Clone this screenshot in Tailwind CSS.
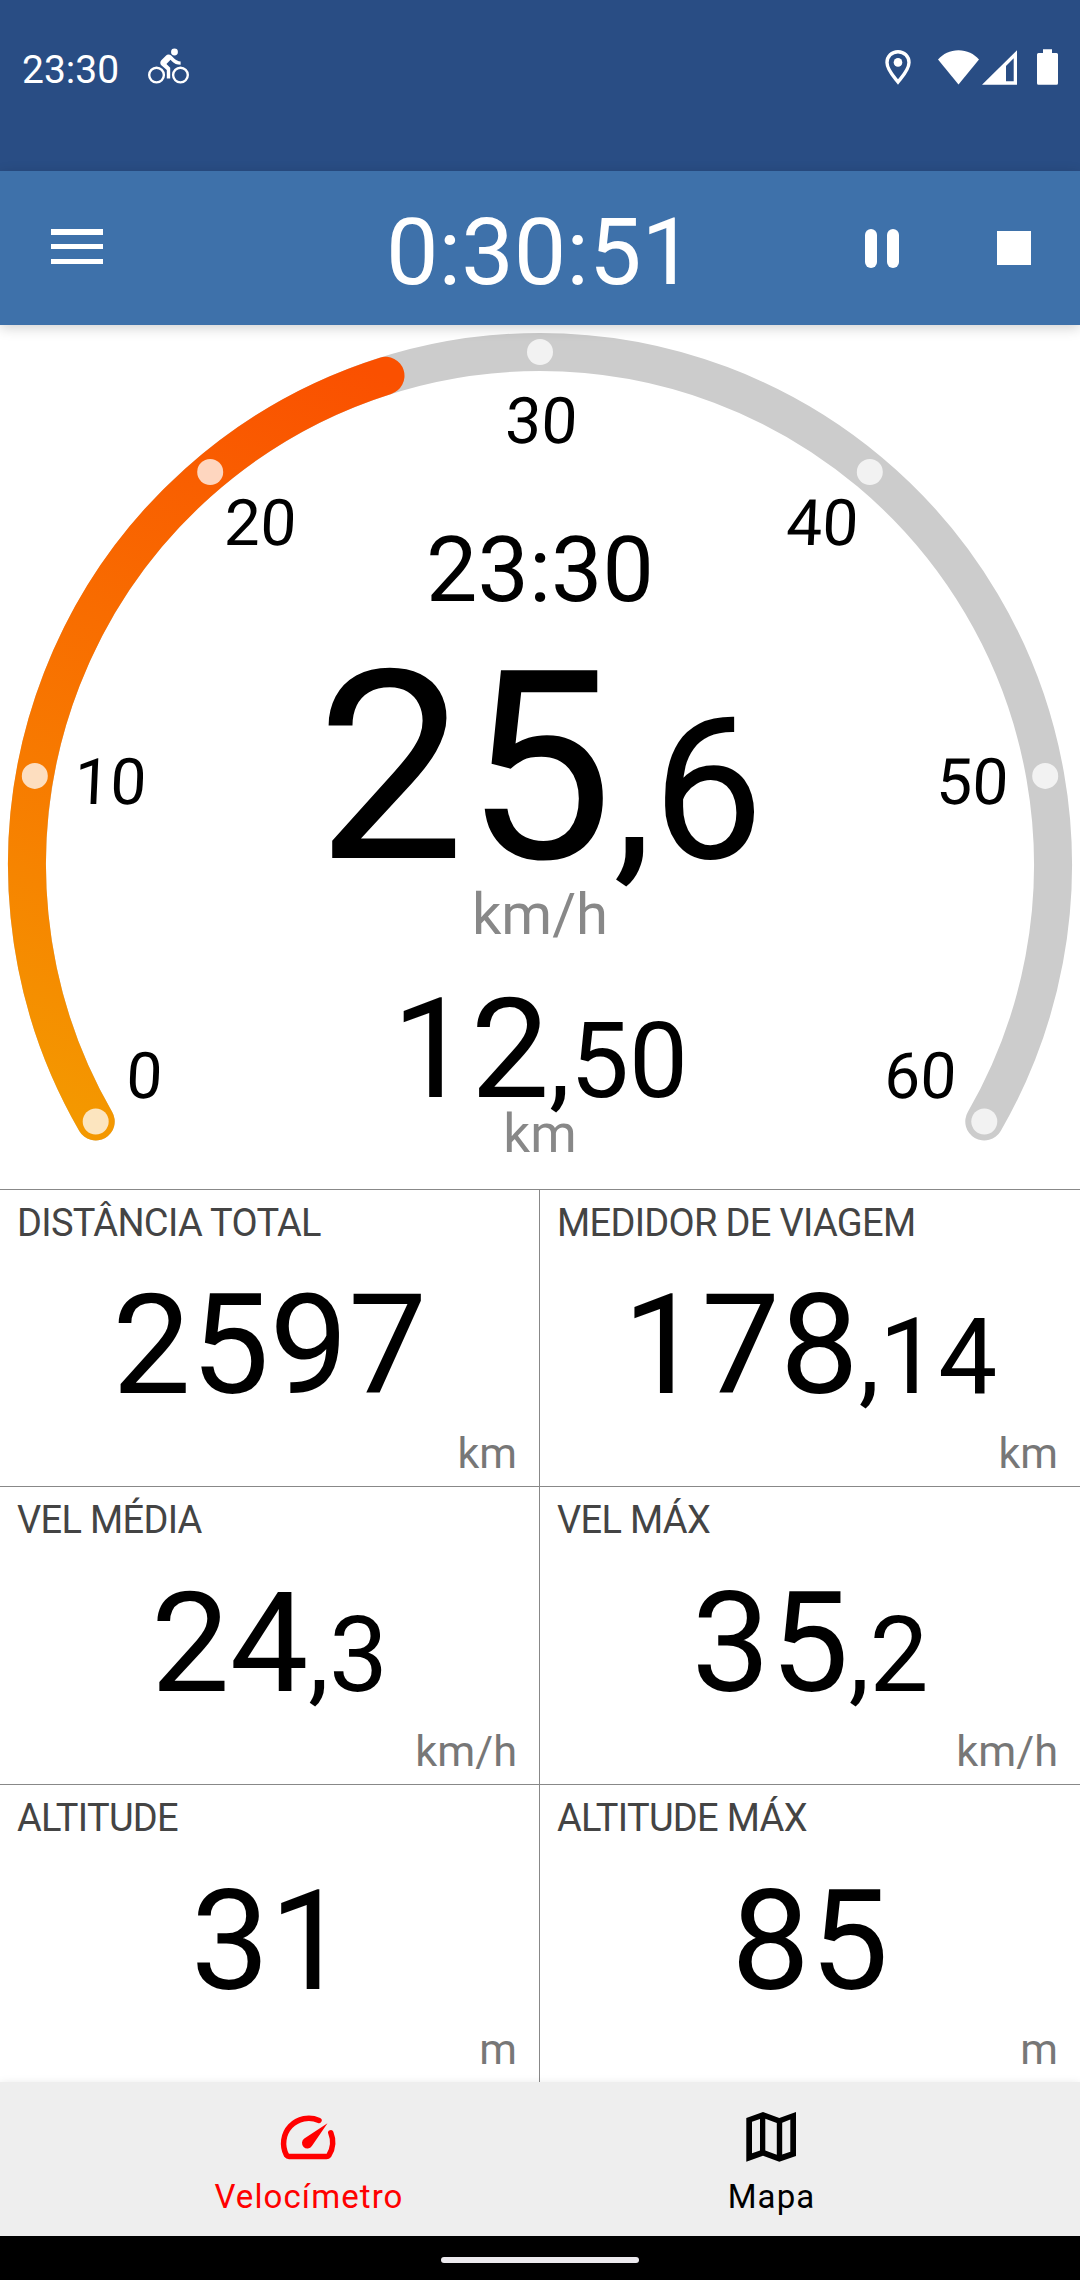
<!DOCTYPE html>
<html lang="pt">
  <head>
    <meta charset="UTF-8" />
    <title>Velocímetro</title>
    <meta name="viewport" content="width=device-width, initial-scale=1.0" />
    <script src="https://cdn.jsdelivr.net/npm/@tailwindcss/browser@4"></script>
  </head>
  <body class="w-[1080px] h-[2280px] flex flex-col overflow-hidden bg-white text-black font-[Roboto,sans-serif]">
    <!-- Status bar -->
    <div class="h-[171px] shrink-0 bg-[#294d84] text-white px-[22px] flex items-start">
      <span class="mt-[48px] text-[39px] leading-[44px] w-[126px]">23:30</span>
      <svg class="mt-[46px] w-[41px] h-[41px]" viewBox="0 0 24 24" fill="currentColor">
        <circle cx="15.5" cy="3.5" r="2" />
        <path d="M10.8 10.5l2.4-2.4.8.8c1.3 1.3 3 2.1 5.1 2.1V9c-1.5 0-2.7-.6-3.6-1.5l-1.9-1.9c-.5-.4-1-.6-1.6-.6s-1.1.2-1.4.6L7.8 8.4c-.4.4-.6.9-.6 1.4 0 .6.2 1.1.6 1.4L11 14v5h2v-6.2z" />
        <g fill="none" stroke="currentColor" stroke-width="1.400">
          <circle cx="5" cy="17" r="4.300" />
          <circle cx="19" cy="17" r="4.300" />
        </g>
      </svg>
      <svg class="ml-auto mt-[47px] w-[178px] h-[40px]" viewBox="880 47 178 40" fill="currentColor">
        <path d="M898 51.700c-6.200 0-11 4.700-11 10.900 0 7.600 7.500 14.900 11 19.400 3.500-4.500 11-11.800 11-19.400 0-6.200-4.800-10.900-11-10.900z" fill="none" stroke="currentColor" stroke-width="3.400" />
        <circle cx="898" cy="62.400" r="4.300" />
        <path d="M938 59.500C943 54 950 50.300 958.500 50.300S974 54 979 59.500L958.500 84.500z" />
        <path fill-rule="evenodd" d="M982 84.800L1017 50.300V84.800zM1006 66V81.200H1013.700V58.300z" />
        <path d="M1043 49.200h9v3.800h4.500q1.500 0 1.500 1.500v28.700q0 1.500-1.500 1.500h-18q-1.500 0-1.500-1.500V54.500q0-1.500 1.500-1.500h4.500z" />
      </svg>
    </div>

    <!-- Toolbar -->
    <header class="relative z-10 h-[154px] shrink-0 bg-[#3e71aa] text-white flex items-center justify-between pl-[51px] pr-[49px] shadow-[0_3px_12px_rgba(0,0,0,0.18)]">
      <div class="w-[52px] h-[35px] -mt-[3px] flex flex-col justify-between">
        <div class="h-[5.5px] bg-white"></div>
        <div class="h-[5.5px] bg-white"></div>
        <div class="h-[5.5px] bg-white"></div>
      </div>
      <h1 class="absolute inset-x-0 top-[35px] text-center text-[93.5px] leading-none">0:30:51</h1>
      <div class="flex items-center">
        <div class="flex gap-[10px] mr-[98px]">
          <div class="w-[12px] h-[39px] rounded-full bg-white"></div>
          <div class="w-[12px] h-[39px] rounded-full bg-white"></div>
        </div>
        <div class="size-[34px] bg-white"></div>
      </div>
    </header>

    <!-- Dial -->
    <main class="relative h-[864px] shrink-0">
      <svg class="absolute inset-0 w-full h-full" viewBox="0 325 1080 864">
        <defs>
          <linearGradient id="speed" gradientUnits="userSpaceOnUse" x1="95.7" y1="1121.5" x2="385" y2="376">
            <stop offset="0" stop-color="#f49800" />
            <stop offset="0.38" stop-color="#f77b00" />
            <stop offset="1" stop-color="#fa5000" />
          </linearGradient>
        </defs>
        <g fill="none" stroke-width="38" stroke-linecap="round">
          <path stroke="#ccc" d="M95.73 1121.5A513 513 0 1 1 984.27 1121.5" />
          <path stroke="url(#speed)" d="M95.73 1121.5A513 513 0 0 1 385.5 375.800" />
        </g>
        <g fill="#fff" fill-opacity="0.75">
          <circle cx="95.7" cy="1121.5" r="13" />
          <circle cx="34.8" cy="775.9" r="13" />
          <circle cx="210.2" cy="472" r="13" />
          <circle cx="540" cy="352" r="13" />
          <circle cx="869.8" cy="472" r="13" />
          <circle cx="1045.2" cy="775.9" r="13" />
          <circle cx="984.3" cy="1121.5" r="13" />
        </g>
        <g font-size="64" text-anchor="middle">
          <text transform="translate(143.5 1098) skewX(-2.5)">0</text>
          <text transform="translate(109.5 803.5) skewX(-2.5)">10</text>
          <text transform="translate(259.5 545) skewX(-2.5)">20</text>
          <text transform="translate(540.5 443) skewX(-2.5)">30</text>
          <text transform="translate(821.5 545) skewX(-2.5)">40</text>
          <text transform="translate(971.5 803.5) skewX(-2.5)">50</text>
          <text transform="translate(919.5 1098) skewX(-2.5)">60</text>
        </g>
      </svg>
      <div class="relative flex flex-col items-center pt-[199px]">
        <p class="text-[91.5px] leading-[92px]">23:30</p>
        <p class="mt-[52px] text-[264px] leading-[200px]">25<span class="text-[198px] leading-[0px]">,6</span></p>
        <p class="mt-[17px] text-[58px] leading-none text-[#888]">km/h</p>
        <p class="mt-[56px] text-[140px] leading-[100px]">12<span class="text-[105px] leading-[0px]">,50</span></p>
        <p class="mt-[9px] text-[53px] leading-none text-[#888]">km</p>
      </div>
    </main>

    <!-- Values -->
    <section class="h-[893px] shrink-0 grid grid-cols-2 grid-rows-[297px_298px_298px]">
      <div class="border-t border-r border-[#888] pt-[11px] px-[17px] flex flex-col">
        <h2 class="text-[38px] leading-[44px] tracking-[-0.68px] text-[#444]">DISTÂNCIA TOTAL</h2>
        <p class="mt-[30px] text-[140px] leading-none text-center">2597</p>
        <p class="mt-[17px] pr-[5px] text-[43px] leading-none text-right text-[#777]">km</p>
      </div>
      <div class="border-t border-[#888] pt-[11px] px-[17px] flex flex-col">
        <h2 class="text-[38px] leading-[44px] tracking-[-0.68px] text-[#444]">MEDIDOR DE VIAGEM</h2>
        <p class="mt-[30px] text-[140px] leading-none text-center">178<span class="text-[105px]">,14</span></p>
        <p class="mt-[17px] pr-[5px] text-[43px] leading-none text-right text-[#777]">km</p>
      </div>
      <div class="border-t border-r border-[#888] pt-[11px] px-[17px] flex flex-col">
        <h2 class="text-[38px] leading-[44px] tracking-[-0.68px] text-[#444]">VEL MÉDIA</h2>
        <p class="mt-[31px] text-[140px] leading-none text-center">24<span class="text-[105px]">,3</span></p>
        <p class="mt-[17px] pr-[5px] text-[43.3px] leading-[43px] text-right text-[#777]">km/h</p>
      </div>
      <div class="border-t border-[#888] pt-[11px] px-[17px] flex flex-col">
        <h2 class="text-[38px] leading-[44px] tracking-[-0.68px] text-[#444]">VEL MÁX</h2>
        <p class="mt-[31px] text-[140px] leading-none text-center">35<span class="text-[105px]">,2</span></p>
        <p class="mt-[17px] pr-[5px] text-[43.3px] leading-[43px] text-right text-[#777]">km/h</p>
      </div>
      <div class="border-t border-r border-[#888] pt-[11px] px-[17px] flex flex-col">
        <h2 class="text-[38px] leading-[44px] tracking-[-0.68px] text-[#444]">ALTITUDE</h2>
        <p class="mt-[31px] text-[140px] leading-none text-center">31</p>
        <p class="mt-[17px] pr-[5px] text-[43px] leading-none text-right text-[#777]">m</p>
      </div>
      <div class="border-t border-[#888] pt-[11px] px-[17px] flex flex-col">
        <h2 class="text-[38px] leading-[44px] tracking-[-0.68px] text-[#444]">ALTITUDE MÁX</h2>
        <p class="mt-[31px] text-[140px] leading-none text-center">85</p>
        <p class="mt-[17px] pr-[5px] text-[43px] leading-none text-right text-[#777]">m</p>
      </div>
    </section>

    <!-- Bottom navigation -->
    <nav class="relative h-[154px] shrink-0 bg-[#eee] flex justify-center shadow-[0_0_8px_rgba(0,0,0,0.08)]">
      <a class="w-[462px] pt-[22px] flex flex-col items-center text-[#ff0000]">
        <svg class="size-[66px]" viewBox="276 2104 66 66" fill="none">
          <path d="M319 2120.4A25.2 25.2 0 0 0 286.5 2155.2Q287.4 2156.4 289 2156.4H326.5Q328 2156.4 329 2155.2A25.2 25.2 0 0 0 330.8 2132.8" stroke="currentColor" stroke-width="5.5" stroke-linecap="round" stroke-linejoin="round" />
          <path d="M327.5 2123.2L311.9 2146A5.4 5.4 0 1 1 304.3 2138.6z" fill="currentColor" />
        </svg>
        <span class="mt-[8px] text-[33px] leading-[38px] tracking-[1.1px]">Velocímetro</span>
      </a>
      <a class="w-[462px] pt-[22px] flex flex-col items-center">
        <svg class="size-[66px]" viewBox="738 2104 66 66" fill="currentColor" fill-rule="evenodd">
          <path d="M746.3 2118L763 2112 779.3 2118 796 2112V2156L779.3 2161.7 763 2155.7 746.3 2161.7zM752 2121.7V2153.3L760 2150.5V2119zM765.3 2118.8V2150.6L776.8 2154.7V2122.9zM782.2 2122.7V2154.6L790.3 2151.8V2119.6z" />
        </svg>
        <span class="mt-[8px] pl-[1px] text-[33px] leading-[38px] tracking-[1.1px]">Mapa</span>
      </a>
    </nav>

    <!-- Gesture bar -->
    <div class="relative h-[44px] shrink-0 bg-black flex justify-center pt-[21px]">
      <div class="w-[198px] h-[6px] rounded-full bg-[#ece9ee]"></div>
    </div>
  </body>
</html>
